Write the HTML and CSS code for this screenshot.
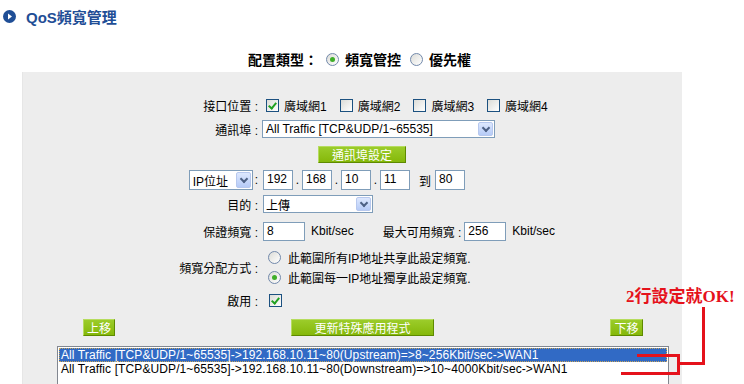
FILE: index.html
```html
<!DOCTYPE html>
<html lang="zh-Hant">
<head>
  <meta charset="UTF-8" />
  <title>QoS頻寬管理</title>
  <link rel="stylesheet" href="styles.css">
</head>
<body>
<div class="title">
  <svg class="title-icon" width="13" height="13" viewBox="0 0 13 13">
    <circle cx="6.5" cy="6.5" r="6.5" fill="#1f4e96"/>
    <path d="M5 3.5 L9 6.5 L5 9.5 Z" fill="#fff"/>
  </svg>
  <h1>QoS頻寬管理</h1>
</div>

<div class="mode">
  <span class="mode-label">配置類型：</span>
  <span class="radio on"></span><span class="mode-opt">頻寬管控</span>
  <span class="radio"></span><span class="mode-opt">優先權</span>
</div>

<div class="panel">
  <div class="form">
    <div class="lbl">接口位置 :</div>
    <div class="val">
      <span class="check on"></span><span class="opt">廣域網1</span>
      <span class="check"></span><span class="opt">廣域網2</span>
      <span class="check"></span><span class="opt">廣域網3</span>
      <span class="check"></span><span class="opt">廣域網4</span>
    </div>

    <div class="lbl">通訊埠 :</div>
    <div class="val">
      <div class="select port-select"><span class="select-text">All Traffic [TCP&amp;UDP/1~65535]</span><span class="select-arrow"></span></div>
    </div>

    <div class="lbl"></div>
    <div class="val">
      <span class="btn port-btn">通訊埠設定</span>
    </div>

    <div class="lbl">
      <div class="select ip-select"><span class="select-text">IP位址</span><span class="select-arrow"></span></div>
      <span class="colon">:</span>
    </div>
    <div class="val">
      <span class="field">192</span><span class="dot">.</span>
      <span class="field">168</span><span class="dot">.</span>
      <span class="field">10</span><span class="dot">.</span>
      <span class="field">11</span>
      <span class="to">到</span>
      <span class="field">80</span>
    </div>

    <div class="lbl">目的 :</div>
    <div class="val">
      <div class="select dir-select"><span class="select-text">上傳</span><span class="select-arrow"></span></div>
    </div>

    <div class="lbl">保證頻寬 :</div>
    <div class="val">
      <span class="field wide">8</span><span class="unit">Kbit/sec</span>
      <span class="max-label">最大可用頻寬 :</span>
      <span class="field wide">256</span><span class="unit">Kbit/sec</span>
    </div>

    <div class="lbl">頻寬分配方式 :</div>
    <div class="val stack">
      <div class="choice"><span class="radio"></span><span>此範圍所有IP地址共享此設定頻寬.</span></div>
      <div class="choice"><span class="radio on"></span><span>此範圍每一IP地址獨享此設定頻寬.</span></div>
    </div>

    <div class="lbl">啟用 :</div>
    <div class="val">
      <span class="check on enable"></span>
    </div>
  </div>

  <div class="actions">
    <span class="btn">上移</span>
    <span class="btn">更新特殊應用程式</span>
    <span class="btn">下移</span>
  </div>

  <div class="list">
    <div class="list-row selected">All Traffic [TCP&amp;UDP/1~65535]-&gt;192.168.10.11~80(Upstream)=&gt;8~256Kbit/sec-&gt;WAN1</div>
    <div class="list-row">All Traffic [TCP&amp;UDP/1~65535]-&gt;192.168.10.11~80(Downstream)=&gt;10~4000Kbit/sec-&gt;WAN1</div>
  </div>
</div>

<div class="note">2行設定就OK!</div>
<svg class="marks" width="744" height="384" viewBox="0 0 744 384">
  <g stroke="#e5121b" stroke-width="3" fill="none">
    <path d="M703.5 307 V363.5 H678.5"/>
    <path d="M637 355.5 H678.5 V373.5 H621"/>
  </g>
</svg>
</body>
</html>
```

FILE: styles.css
```css
body {
  margin: 0;
  background: #fff;
  font-family: 'Liberation Sans', Arial, 'Noto Sans CJK TC', sans-serif;
  font-size: 12px;
  color: #000;
  position: relative;
  width: 744px;
  height: 384px;
  overflow: hidden;
}

/* heading */
.title {
  height: 33px;
  display: flex;
  align-items: center;
  padding-left: 3px;
}
.title-icon {
  margin-right: 10px;
}
.title h1 {
  margin: 0;
  font-size: 15px;
  font-weight: bold;
  color: #1f4e96;
}

.mode {
  margin-top: 14px;
  height: 24px;
  display: flex;
  align-items: center;
  padding-left: 248px;
  font-size: 14px;
  font-weight: bold;
}
.mode-label {
  margin-right: 8px;
}
.mode-opt {
  margin: 0 9px 0 6px;
}

/* grey panel */
.panel {
  margin-top: 1px;
  margin-left: 22px;
  width: 660px;
  height: 312px;
  background: #ededed;
  box-sizing: border-box;
  padding-top: 21px;
  border-left: 1px solid #e6e6e6;
  overflow: hidden;
}
.form {
  display: grid;
  grid-template-columns: 235px 1fr;
  grid-template-rows: 24px 24px 26px 26px 22px 32px 40px 26px;
  column-gap: 5px;
}
.lbl {
  display: flex;
  align-items: center;
  justify-content: flex-end;
  white-space: nowrap;
}
.val {
  display: flex;
  align-items: center;
  white-space: nowrap;
}
.val.stack {
  flex-direction: column;
  align-items: flex-start;
  justify-content: center;
}
.choice {
  height: 20px;
  display: flex;
  align-items: center;
}
.choice .radio {
  margin: 0 7px 0 5px;
}
.opt {
  margin: 0 10px 0 5px;
}
.colon {
  margin-left: 2px;
}

/* XP style controls */
.check {
  display: inline-block;
  width: 11px;
  height: 11px;
  margin-left: 3px;
  border: 1px solid #1c5180;
  background: linear-gradient(135deg, #dcdcd7, #fff);
  position: relative;
}
.check.on::after {
  content: '';
  position: absolute;
  left: 3px;
  top: 1px;
  width: 3px;
  height: 6px;
  border: solid #21a121;
  border-width: 0 2px 2px 0;
  transform: rotate(40deg);
}
.check.enable {
  margin-left: 6px;
}
.radio {
  display: inline-block;
  width: 11px;
  height: 11px;
  border: 1px solid #7289ab;
  border-radius: 50%;
  background: linear-gradient(135deg, #dcdcd7, #fff);
  position: relative;
}
.radio.on::after {
  content: '';
  position: absolute;
  left: 3px;
  top: 3px;
  width: 5px;
  height: 5px;
  border-radius: 50%;
  background: #3fae29;
}

.select {
  display: inline-flex;
  box-sizing: border-box;
  border: 1px solid #7f9db9;
  background: #fff;
  align-items: stretch;
}
.select-text {
  flex: 1;
  padding-left: 3px;
  display: flex;
  align-items: center;
  overflow: hidden;
}
.select-arrow {
  width: 15px;
  margin: 1px;
  box-sizing: border-box;
  border: 1px solid #b7c8ee;
  border-radius: 2px;
  background: linear-gradient(#dde8fe, #b6cbf7);
  position: relative;
}
.select-arrow::after {
  content: '';
  position: absolute;
  left: 4px;
  top: 50%;
  margin-top: -4px;
  width: 4px;
  height: 4px;
  border: solid #4d6185;
  border-width: 0 2px 2px 0;
  transform: rotate(45deg);
}
.port-select {
  width: 233px;
  height: 18px;
  margin-left: -1px;
}
.ip-select {
  width: 64px;
  height: 20px;
}
.dir-select {
  width: 110px;
  height: 18px;
}
.dir-select .select-text {
  padding-left: 2px;
}

.field {
  display: inline-block;
  box-sizing: border-box;
  width: 30px;
  height: 20px;
  border: 1px solid #7f9db9;
  background: #fff;
  padding: 1px 0 0 3px;
  line-height: 14px;
}
.field.wide {
  width: 42px;
  height: 19px;
}
.dot {
  width: 9px;
  text-align: center;
}
.to {
  margin: 0 4px 0 9px;
}
.unit {
  margin-left: 6px;
}
.max-label {
  margin: 0 3px 0 29px;
}

.btn {
  display: inline-flex;
  align-items: center;
  justify-content: center;
  box-sizing: border-box;
  height: 17px;
  padding: 0;
  white-space: nowrap;
  color: #fff;
  background: linear-gradient(#9bcc2a, #85b80a);
  border: 1px solid;
  border-color: #b6dc5e #5e8a00 #5e8a00 #b6dc5e;
}
.port-btn {
  width: 88px;
  margin-left: 55px;
}

.actions {
  margin-top: 6px;
  display: flex;
  justify-content: space-between;
  padding: 0 39px 0 60px;
}
.actions .btn:nth-child(1) {
  width: 32px;
}
.actions .btn:nth-child(2) {
  width: 143px;
}
.actions .btn:nth-child(3) {
  width: 33px;
}

.list {
  margin: 10px 0 0 34px;
  width: 612px;
  height: 38px;
  box-sizing: border-box;
  border: 1px solid #828790;
  border-bottom: 0;
  background: #fff;
  padding: 1px;
  letter-spacing: 0.1px;
}
.list-row {
  height: 14px;
  line-height: 14px;
  padding-left: 2px;
  white-space: nowrap;
}
.list-row.selected {
  background: #316ac5;
  color: #fff;
  outline: 1px dotted #c9a55a;
  outline-offset: -1px;
}

/* annotation */
.note {
  position: absolute;
  left: 626px;
  top: 282px;
  font-family: 'Liberation Serif', 'Noto Sans CJK TC', serif;
  font-size: 17px;
  font-weight: bold;
  color: #e5121b;
  white-space: nowrap;
}
.marks {
  position: absolute;
  left: 0;
  top: 0;
  pointer-events: none;
}
```
